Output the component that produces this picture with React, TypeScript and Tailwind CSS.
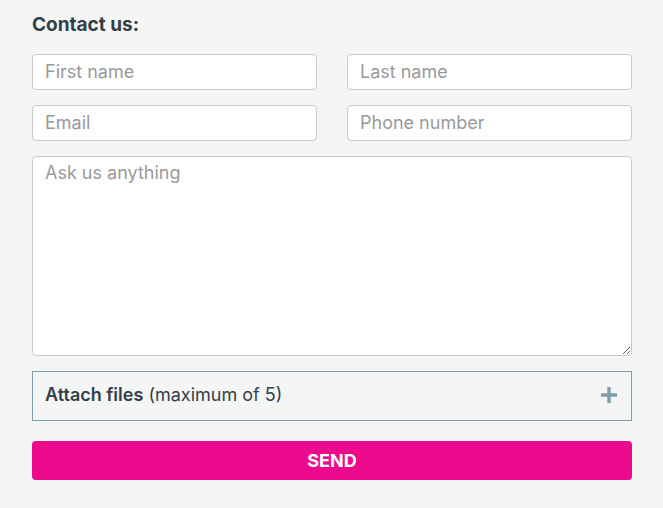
import React from 'react';

const fieldClass =
  'block w-full rounded-[4px] border border-[#c8caca] bg-white px-3 text-lg text-[#333f48] placeholder:text-[#999999] placeholder:opacity-100 outline-none focus:border-[#7f9dab]';

type FieldProps = { label: string; name: string; type?: string };

function Field({ label, name, type = 'text' }: FieldProps) {
  return (
    <input
      type={type}
      name={name}
      aria-label={label}
      placeholder={label}
      className={`${fieldClass} h-9 leading-6 pb-0.5`}
    />
  );
}

export default function App() {
  return (
    <main className="min-h-screen bg-[#f4f6f5] pt-[13px] pr-[31px] pb-7 pl-8 font-['Inter','Liberation_Sans',sans-serif] text-[#333f48]">
      <form onSubmit={(event) => event.preventDefault()}>
        <h2 className="mb-[17px] text-[19px] leading-6 font-bold">Contact us:</h2>

        <div className="grid grid-cols-2 gap-x-[30px] gap-y-[15px]">
          <Field label="First name" name="firstName" />
          <Field label="Last name" name="lastName" />
          <Field label="Email" name="email" type="email" />
          <Field label="Phone number" name="phone" type="tel" />
        </div>

        <textarea
          name="message"
          aria-label="Ask us anything"
          placeholder="Ask us anything"
          className={`${fieldClass} mt-[15px] h-[200px] resize-y py-1 leading-6`}
        />

        <button
          type="button"
          className="mt-[15px] flex h-[50px] w-full items-center justify-between border border-[#7f9dab] px-3 text-left text-lg leading-6"
        >
          <span className="pb-0.5">
            <span className="font-semibold">Attach files</span> (maximum of 5)
          </span>
          <svg className="mr-0.5 mb-0.5 size-4" viewBox="0 0 16 16" fill="none" aria-hidden="true">
            <path d="M0 8h16M8 0v16" stroke="#7f9dab" strokeWidth="3.4" />
          </svg>
        </button>

        <button
          type="submit"
          className="mt-5 h-[39px] w-full rounded-[4px] bg-[#ec0b8c] text-lg leading-6 font-bold text-white"
        >
          SEND
        </button>
      </form>
    </main>
  );
}
